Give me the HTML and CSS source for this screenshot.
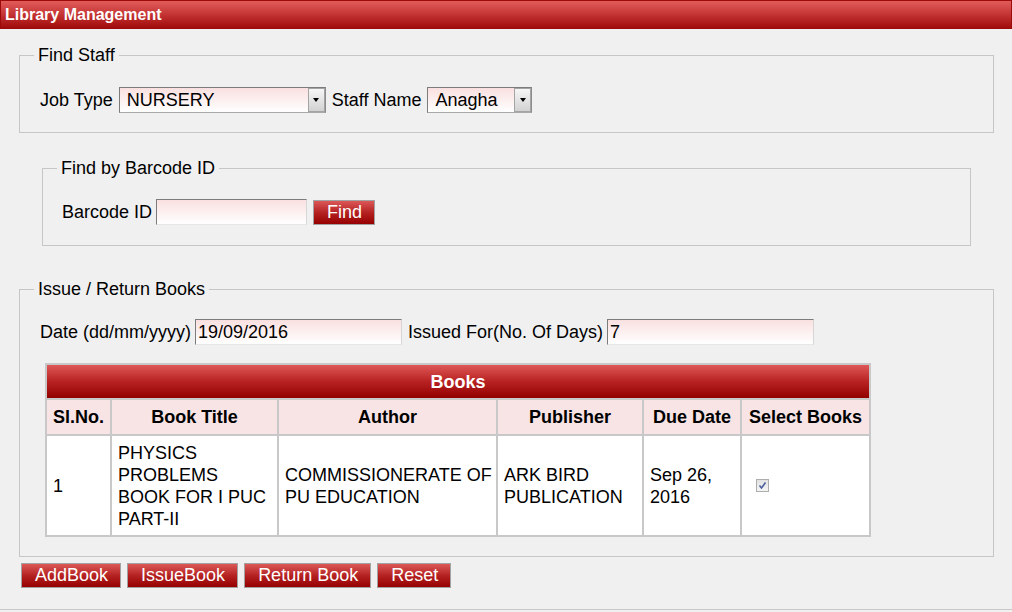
FILE: index.html
```html
<!DOCTYPE html>
<html lang="en">
<head>
    <meta charset="UTF-8">
    <meta name="viewport" content="width=device-width, initial-scale=1.0">
    <title>Library Management</title>
    <link rel="stylesheet" href="styles.css">
</head>
<body>
    <div class="page">
        <div class="title-bar">Library Management</div>

        <fieldset class="box find-staff">
            <legend>Find Staff</legend>
            <div class="field-row">
                <label for="job-type">Job Type</label>
                <div class="select job-type">
                    <select id="job-type"><option>NURSERY</option></select>
                    <span class="select-arrow"></span>
                </div>
                <label for="staff-name">Staff Name</label>
                <div class="select staff-name">
                    <select id="staff-name"><option>Anagha</option></select>
                    <span class="select-arrow"></span>
                </div>
            </div>
        </fieldset>

        <fieldset class="box find-barcode">
            <legend>Find by Barcode ID</legend>
            <div class="field-row tight">
                <label for="barcode">Barcode ID</label>
                <input type="text" id="barcode" class="text-input barcode-input">
                <button type="button" class="btn after-input">Find</button>
            </div>
        </fieldset>

        <fieldset class="box issue-return">
            <legend>Issue / Return Books</legend>
            <div class="field-row tight">
                <label for="issue-date">Date (dd/mm/yyyy)</label>
                <input type="text" id="issue-date" class="text-input" value="19/09/2016">
                <label for="issue-days" class="after-input">Issued For(No. Of Days)</label>
                <input type="text" id="issue-days" class="text-input" value="7">
            </div>

            <table class="books">
                <colgroup>
                    <col class="col-no">
                    <col class="col-title">
                    <col class="col-author">
                    <col class="col-publisher">
                    <col class="col-due">
                    <col class="col-select">
                </colgroup>
                <thead>
                    <tr><th colspan="6" class="books-caption">Books</th></tr>
                    <tr class="col-heads">
                        <th>Sl.No.</th>
                        <th>Book Title</th>
                        <th>Author</th>
                        <th>Publisher</th>
                        <th>Due Date</th>
                        <th>Select Books</th>
                    </tr>
                </thead>
                <tbody>
                    <tr>
                        <td>1</td>
                        <td>PHYSICS PROBLEMS BOOK FOR I PUC PART-II</td>
                        <td>COMMISSIONERATE OF PU EDUCATION</td>
                        <td>ARK BIRD PUBLICATION</td>
                        <td>Sep 26, 2016</td>
                        <td>
                            <span class="check" role="checkbox" aria-checked="true">
                                <svg width="11" height="11" viewBox="0 0 11 11">
                                    <polyline points="2.5 5.5 4.5 8 8.5 2.5" fill="none" stroke="#4d5f9e" stroke-width="1.6"></polyline>
                                </svg>
                            </span>
                        </td>
                    </tr>
                </tbody>
            </table>
        </fieldset>

        <div class="actions">
            <button type="button" class="btn">AddBook</button>
            <button type="button" class="btn">IssueBook</button>
            <button type="button" class="btn">Return Book</button>
            <button type="button" class="btn">Reset</button>
        </div>
    </div>
</body>
</html>
```

FILE: styles.css
```css
body {
    margin: 0;
    background: #f0f0f0;
    color: #000;
    font-family: "Liberation Sans", Arial, sans-serif;
    font-size: 18px;
}
.page {
    padding-bottom: 21px;
    border-bottom: 1px solid #c8c8c8;
}
.title-bar {
    height: 27px;
    line-height: 27px;
    padding-left: 4px;
    border: 1px solid #9c0a0a;
    background: linear-gradient(#e25c5c, #c43434 50%, #a10b0b);
    color: #fff;
    font-size: 16px;
    font-weight: bold;
}
.box {
    min-width: 0;
    border: 1px solid #c6c6c6;
}
.box legend {
    padding: 0 4px;
    margin-left: -6px;
    line-height: 20px;
}
.find-staff {
    margin: 16px 18px 0 19px;
    padding: 22px 20px 19px;
}
.find-barcode {
    margin: 25px 41px 0 42px;
    padding: 21px 19px 20px;
}
.find-barcode legend {
    margin-left: -5px;
}
.issue-return {
    margin: 33px 18px 0 19px;
    padding: 20px 20px 19px;
}
.field-row {
    display: flex;
    align-items: center;
    gap: 6px;
}
.field-row.tight {
    gap: 4px;
}
.after-input {
    margin-left: 2px;
}
.select {
    display: flex;
    height: 26px;
    box-sizing: border-box;
    border: 1px solid;
    border-color: #7c7c7c #8c8c8c #a8a8a8 #7c7c7c;
    background: linear-gradient(#fae0e0, #fff);
}
.select select {
    flex: 1;
    min-width: 0;
    appearance: none;
    border: none;
    background: transparent;
    padding: 0 0 0 7px;
    font: inherit;
    color: #000;
}
.job-type {
    width: 207px;
}
.staff-name {
    width: 105px;
}
.select-arrow {
    width: 17px;
    box-sizing: border-box;
    border: 1px solid #a4a4a4;
    background: linear-gradient(#f6f6f6, #d2d2d2);
    display: flex;
    align-items: center;
    justify-content: center;
}
.select-arrow::after {
    content: "";
    border-top: 4px solid #000;
    border-left: 3px solid transparent;
    border-right: 3px solid transparent;
}
.text-input {
    width: 207px;
    height: 26px;
    box-sizing: border-box;
    padding: 0 2px;
    border: 1px solid;
    border-color: #7c7c7c #d6d6d6 #e6e6e6 #7c7c7c;
    background: linear-gradient(#fae0e0, #fff);
    font: inherit;
    color: #000;
}
.barcode-input {
    width: 151px;
}
.btn {
    height: 25px;
    padding: 0 12px 0 13px;
    border: 1px solid #a2a2a2;
    background: linear-gradient(#dc5858, #b52222 50%, #960000);
    color: #fff;
    font: 18px "Liberation Sans", Arial, sans-serif;
    line-height: 23px;
    cursor: pointer;
}
.books {
    margin: 18px 0 0 5px;
    width: 824px;
    table-layout: fixed;
    border-collapse: collapse;
    border: 2px solid #c8c8c8;
    line-height: 22px;
}
.books th,
.books td {
    border: 2px solid #c8c8c8;
}
.col-no { width: 65px; }
.col-title { width: 167px; }
.col-author { width: 219px; }
.col-publisher { width: 146px; }
.col-due { width: 98px; }
.col-select { width: 129px; }
.books-caption {
    padding: 6px 0 5px;
    background: linear-gradient(#de5757, #b82222 50%, #930000);
    color: #fff;
}
.col-heads th {
    padding: 6px 0;
    background: #f8e4e4;
}
.books td {
    padding: 6px 2px 5px 6px;
    background: #fff;
    vertical-align: middle;
}
.check {
    display: flex;
    align-items: center;
    justify-content: center;
    width: 13px;
    height: 13px;
    box-sizing: border-box;
    margin: -1px 0 0 8px;
    border: 1px solid #adadad;
    background: linear-gradient(#e2e2e2, #f5f5f5);
}
.actions {
    display: flex;
    gap: 6px;
    margin: 6px 0 0 21px;
}
```
